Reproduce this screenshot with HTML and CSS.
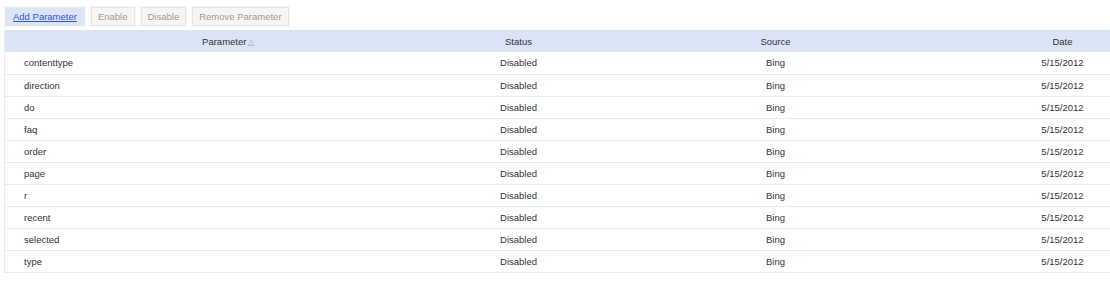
FILE: index.html
```html
<!DOCTYPE html>
<html lang="en">
<head>
    <meta charset="UTF-8">
    <meta name="viewport" content="width=device-width, initial-scale=1.0">
    <title>URL Parameters</title>
    <link rel="stylesheet" href="styles.css">
</head>
<body>
    <div class="toolbar">
        <button class="tool-btn active">Add Parameter</button>
        <button class="tool-btn" disabled>Enable</button>
        <button class="tool-btn" disabled>Disable</button>
        <button class="tool-btn" disabled>Remove Parameter</button>
    </div>

    <div class="grid-wrap">
        <table class="grid">
            <colgroup>
                <col class="col-param">
                <col class="col-status">
                <col class="col-source">
                <col class="col-date">
            </colgroup>
            <thead>
                <tr>
                    <th>Parameter<span class="sort">&#9651;</span></th>
                    <th>Status</th>
                    <th>Source</th>
                    <th>Date</th>
                </tr>
            </thead>
            <tbody>
                <tr><td class="name">contenttype</td><td>Disabled</td><td>Bing</td><td>5/15/2012</td></tr>
                <tr><td class="name">direction</td><td>Disabled</td><td>Bing</td><td>5/15/2012</td></tr>
                <tr><td class="name">do</td><td>Disabled</td><td>Bing</td><td>5/15/2012</td></tr>
                <tr><td class="name">faq</td><td>Disabled</td><td>Bing</td><td>5/15/2012</td></tr>
                <tr><td class="name">order</td><td>Disabled</td><td>Bing</td><td>5/15/2012</td></tr>
                <tr><td class="name">page</td><td>Disabled</td><td>Bing</td><td>5/15/2012</td></tr>
                <tr><td class="name">r</td><td>Disabled</td><td>Bing</td><td>5/15/2012</td></tr>
                <tr><td class="name">recent</td><td>Disabled</td><td>Bing</td><td>5/15/2012</td></tr>
                <tr><td class="name">selected</td><td>Disabled</td><td>Bing</td><td>5/15/2012</td></tr>
                <tr><td class="name">type</td><td>Disabled</td><td>Bing</td><td>5/15/2012</td></tr>
            </tbody>
        </table>
    </div>
</body>
</html>
```

FILE: styles.css
```css
* {
    margin: 0;
    padding: 0;
    box-sizing: border-box;
    font-family: 'Liberation Sans', Arial, sans-serif;
}

body {
    background: #fff;
    color: #333;
    font-size: 9.5px;
    overflow: hidden;
}

.toolbar {
    display: flex;
    gap: 6px;
    padding: 7px 0 0 5px;
    height: 30px;
}

.tool-btn {
    height: 19px;
    padding: 0 6px;
    font-size: 9.5px;
    color: #9c9c9c;
    background: #f5f5f5;
    border: 1px solid #e6e6e6;
    box-shadow: 0 0 0 1px #f7f7f7;
    cursor: default;
}

.tool-btn.active {
    padding: 0 7px;
    color: #2f56c4;
    text-decoration: underline;
    background: #dbe5f5;
    border-color: #e3e9f3;
    cursor: pointer;
}

.grid-wrap {
    width: 100%;
    overflow: hidden;
    padding-left: 4px;
}

.grid {
    width: 1155px;
    border-collapse: collapse;
    table-layout: fixed;
    border-left: 1px solid #ececec;
}

.col-param { width: 447px; }
.col-status { width: 134px; }
.col-source { width: 380px; }
.col-date { width: 194px; }

.grid th {
    height: 22px;
    background: #dbe4f4;
    font-weight: normal;
    color: #333;
    text-align: center;
}

.grid td {
    height: 22px;
    text-align: center;
    border-bottom: 1px solid #ececec;
}

.grid td.name {
    text-align: left;
    padding-left: 19px;
}

.sort {
    color: #a0a0a0;
    font-size: 8px;
    margin-left: 2px;
}
```
